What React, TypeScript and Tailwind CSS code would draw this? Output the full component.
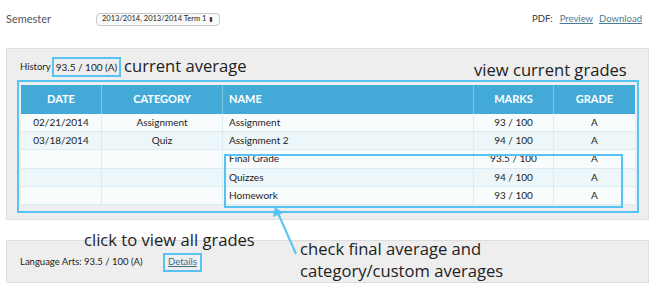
import React from "react";

const rows = [
  { date: "02/21/2014", cat: "Assignment", name: "Assignment", marks: "93 / 100", grade: "A" },
  { date: "03/18/2014", cat: "Quiz", name: "Assignment 2", marks: "94 / 100", grade: "A" },
  { date: "", cat: "", name: "Final Grade", marks: "93.5 / 100", grade: "A" },
  { date: "", cat: "", name: "Quizzes", marks: "94 / 100", grade: "A" },
  { date: "", cat: "", name: "Homework", marks: "93 / 100", grade: "A" },
];

export default function App() {
  return (
    <div className="relative w-[660px] h-[292px] bg-white font-['Lato',sans-serif] text-[#333] overflow-hidden">
      {/* top bar */}
      <div className="flex items-center h-[38px] pl-[6px] pr-[18px]">
        <span className="w-[90px] text-[11px] text-[#555]">Semester</span>
        <div className="flex items-center justify-between h-[13px] w-[124px] rounded-[4px] border border-[#c8c8c8] bg-[#fafafa] px-[5px] text-[7.5px] text-[#222]">
          <span>2013/2014, 2013/2014 Term 1</span>
          <span className="text-[7px] leading-none">⬍</span>
        </div>
        <div className="ml-auto flex items-center gap-[6px] text-[9.5px]">
          <span className="text-[#333] mr-[1px]">PDF:</span>
          <span className="underline text-[#4a7b96]">Preview</span>
          <span className="underline text-[#4a7b96]">Download</span>
        </div>
      </div>

      {/* history panel */}
      <div className="ml-[6px] mt-[10px] w-[643px] h-[172px] bg-[#eeeeee] border border-[#dddddd]">
        <div className="flex items-center h-[20px] mt-[8px] pl-[13px]">
          <span className="text-[9.5px] text-[#222]">History</span>
          <span className="ml-[1px] h-[20px] px-[2px] flex items-center border-2 border-[#56c3f2] text-[10px] text-[#222]">
            93.5 / 100 (A)
          </span>
        </div>
        <div className="relative ml-[10px] mt-[3px] w-[622px] h-[133px] border-2 border-[#56c3f2] pt-[3px] pl-[2px]">
          <div className="w-[614px]">
            <div className="grid grid-cols-[81px_121px_251px_80px_81px] h-[29px] bg-[#43aad8] text-white font-bold text-[11px] uppercase">
              <div className="flex items-center justify-center border-r border-[#7cc6e8]">Date</div>
              <div className="flex items-center justify-center border-r border-[#7cc6e8]">Category</div>
              <div className="flex items-center pl-[6px] border-r border-[#7cc6e8]">Name</div>
              <div className="flex items-center justify-center border-r border-[#7cc6e8]">Marks</div>
              <div className="flex items-center justify-center">Grade</div>
            </div>
            {rows.map((r, i) => (
              <div
                key={i}
                className={`grid grid-cols-[81px_121px_251px_80px_81px] h-[18.2px] text-[10px] text-[#222] border-b border-[#d9ecf4] ${i % 2 === 0 ? "bg-[#f9fcfd]" : "bg-[#edf6f9]"}`}
              >
                <div className="flex items-center justify-center border-r border-[#d9ecf4]">{r.date}</div>
                <div className="flex items-center justify-center border-r border-[#d9ecf4]">{r.cat}</div>
                <div className="flex items-center pl-[6px] border-r border-[#d9ecf4]">{r.name}</div>
                <div className="flex items-center justify-center border-r border-[#d9ecf4]">{r.marks}</div>
                <div className="flex items-center justify-center">{r.grade}</div>
              </div>
            ))}
          </div>
          <div className="absolute left-[205px] top-[72px] w-[399px] h-[54px] border-2 border-[#56c3f2]" />
        </div>
      </div>

      {/* language arts panel */}
      <div className="ml-[6px] mt-[20px] w-[643px] h-[43px] bg-[#eeeeee] border border-[#dddddd] flex items-center pl-[13px] pt-[1px]">
        <span className="text-[9.5px] text-[#222] w-[143px]">Language Arts: 93.5 / 100 (A)</span>
        <span className="h-[19px] px-[3px] flex items-center border-2 border-[#56c3f2] text-[9.5px] text-[#3f6f86] underline">
          Details
        </span>
      </div>

      {/* annotations */}
      <div className="absolute left-[124px] top-[53.5px] text-[16.6px] leading-[24px] font-['Open_Sans',sans-serif] text-[#222]">
        current average
      </div>
      <div className="absolute left-[474px] top-[57.5px] text-[16.6px] leading-[24px] font-['Open_Sans',sans-serif] text-[#222]">
        view current grades
      </div>
      <div className="absolute left-[84px] top-[227.5px] text-[16.6px] leading-[24px] font-['Open_Sans',sans-serif] text-[#222]">
        click to view all grades
      </div>
      <div className="absolute left-[300px] top-[237.5px] text-[16.6px] leading-[22px] font-['Open_Sans',sans-serif] text-[#222]">
        check final average and
        <br />
        category/custom averages
      </div>
      <svg className="absolute left-0 top-0" width="660" height="292" viewBox="0 0 660 292">
        <line x1="296" y1="254" x2="278" y2="213" stroke="#56c3f2" strokeWidth="2" />
        <polygon points="275,207 273,217 283,213" fill="#56c3f2" />
      </svg>
    </div>
  );
}
